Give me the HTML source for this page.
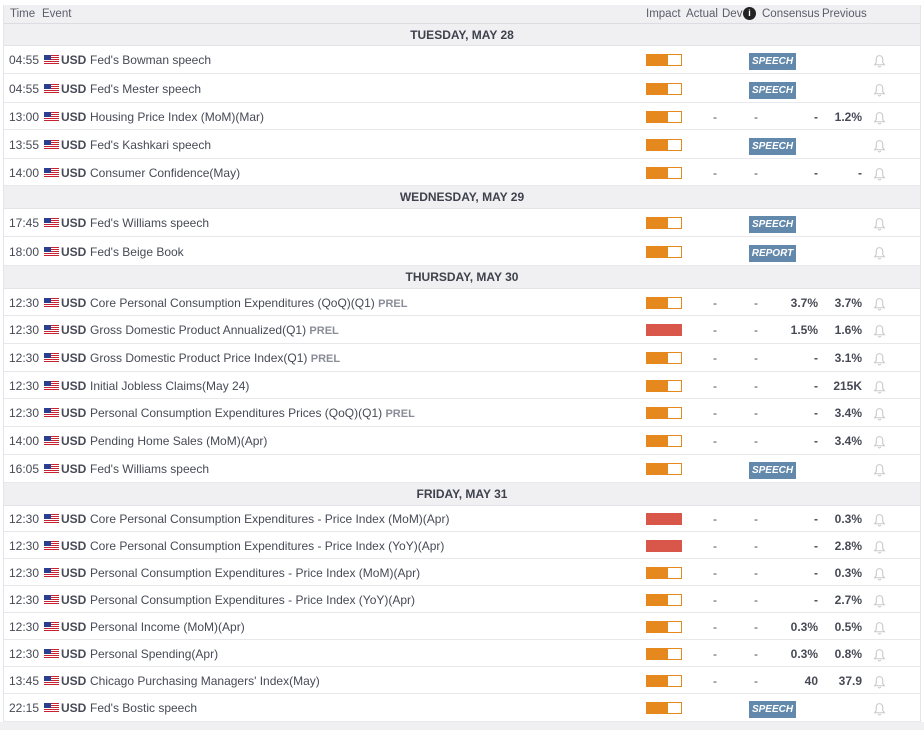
<!DOCTYPE html>
<html><head><meta charset="utf-8"><style>
*{margin:0;padding:0;box-sizing:border-box}
body{width:924px;height:730px;background:#fff;font-family:"Liberation Sans",Arial,sans-serif;font-size:12px;color:#474a56;position:relative;overflow:hidden}
.wrap{position:absolute;left:3px;top:5px;width:918px;height:725px;border-left:1px solid #e4e4e8;border-right:1px solid #e4e4e8}
.bot{position:absolute;left:0;top:722px;width:924px;height:8px;background:#f0f0f2}
.hd{position:absolute;left:4px;top:5px;width:916px;height:19px;background:#f0f0f3;border-bottom:1px solid #dcdce2;font-size:11.5px;color:#5a5d6a}
.hd span{position:absolute;top:3px}
.day{position:absolute;left:4px;width:916px;background:#f0f0f3;font-weight:bold;text-align:center;color:#3f424d;border-bottom:1px solid #e4e4e8}
.r{position:absolute;left:4px;width:916px;border-bottom:1px solid #e8e8ec}
.r>*{position:absolute}
.t{left:5px}
.f{left:40px;width:15px;height:10px;background:repeating-linear-gradient(#c8212f 0 1px,#fff 1px 2px)}
.f:before{content:"";position:absolute;left:0;top:0;width:7px;height:5px;background:#2a3f8f}
.c{left:57px;font-weight:bold}
.e{left:86px}
.p{color:#8a8d98;font-weight:bold;font-size:11px}
.imp{left:642px;width:36px;height:12px;border:1px solid #e5891e;background:linear-gradient(90deg,#e5891e 0 62%,#fff 62%)}
.imp.h{background:#d9574a;border-color:#d9574a}
.a{left:709px}.d{left:750px}
.cn{right:102px;font-weight:bold}
.pv{right:58px;font-weight:bold}
.b{left:745px;width:47px;height:17px;background:#6288ac;color:#fff;font-size:10px;font-weight:bold;font-style:italic;text-align:center;line-height:17px}
.bell{left:869px;width:13px;height:14px}
</style></head><body>
<div class="wrap"></div>
<div class="hd"><span style="left:6px">Time</span><span style="left:38px">Event</span><span style="left:642px">Impact</span><span style="left:682px">Actual</span><span style="left:718px">Dev</span><span style="left:739px;width:13px;height:13px;border-radius:7px;background:#222;color:#fff;font-size:9px;font-weight:bold;text-align:center;line-height:13px;top:2px">i</span><span style="left:758px">Consensus</span><span style="left:818px">Previous</span></div>
<div id="c"></div>
<div class="bot"></div>
<script>
var bell='<svg class="bell" viewBox="0 0 12 13"><path d="M6 1.5C3.8 1.5 3 3.2 3 5v3l-1.5 2h9L9 8V5c0-1.8-.8-3.5-3-3.5zM4.8 11.2a1.3 1.3 0 002.4 0" fill="none" stroke="#c8c8cd" stroke-width="1"/></svg>';
var rows=[
['D',24,46,'TUESDAY, MAY 28'],
['R',46,74,'04:55',"Fed's Bowman speech",'',0,'S'],
['R',74,103,'04:55',"Fed's Mester speech",'',0,'S'],
['R',103,130,'13:00','Housing Price Index (MoM)(Mar)','',0,['-','-','-','1.2%']],
['R',130,159,'13:55',"Fed's Kashkari speech",'',0,'S'],
['R',159,186,'14:00','Consumer Confidence(May)','',0,['-','-','-','-']],
['D',186,209,'WEDNESDAY, MAY 29'],
['R',209,237,'17:45',"Fed's Williams speech",'',0,'S'],
['R',237,266,'18:00',"Fed's Beige Book",'',0,'REPORT'],
['D',266,289,'THURSDAY, MAY 30'],
['R',289,316,'12:30','Core Personal Consumption Expenditures (QoQ)(Q1)','PREL',0,['-','-','3.7%','3.7%']],
['R',316,344,'12:30','Gross Domestic Product Annualized(Q1)','PREL',1,['-','-','1.5%','1.6%']],
['R',344,372,'12:30','Gross Domestic Product Price Index(Q1)','PREL',0,['-','-','-','3.1%']],
['R',372,399,'12:30','Initial Jobless Claims(May 24)','',0,['-','-','-','215K']],
['R',399,427,'12:30','Personal Consumption Expenditures Prices (QoQ)(Q1)','PREL',0,['-','-','-','3.4%']],
['R',427,455,'14:00','Pending Home Sales (MoM)(Apr)','',0,['-','-','-','3.4%']],
['R',455,483,'16:05',"Fed's Williams speech",'',0,'S'],
['D',483,506,'FRIDAY, MAY 31'],
['R',506,532,'12:30','Core Personal Consumption Expenditures - Price Index (MoM)(Apr)','',1,['-','-','-','0.3%']],
['R',532,559,'12:30','Core Personal Consumption Expenditures - Price Index (YoY)(Apr)','',1,['-','-','-','2.8%']],
['R',559,586,'12:30','Personal Consumption Expenditures - Price Index (MoM)(Apr)','',0,['-','-','-','0.3%']],
['R',586,613,'12:30','Personal Consumption Expenditures - Price Index (YoY)(Apr)','',0,['-','-','-','2.7%']],
['R',613,640,'12:30','Personal Income (MoM)(Apr)','',0,['-','-','0.3%','0.5%']],
['R',640,667,'12:30','Personal Spending(Apr)','',0,['-','-','0.3%','0.8%']],
['R',667,694,'13:45',"Chicago Purchasing Managers' Index(May)",'',0,['-','-','40','37.9']],
['R',694,722,'22:15',"Fed's Bostic speech",'',0,'S']
];
var h='';
rows.forEach(function(r){
 var H=r[2]-r[1];
 if(r[0]=='D'){h+='<div class="day" style="top:'+r[1]+'px;height:'+H+'px;line-height:'+H+'px">'+r[3]+'</div>';return;}
 var tp=(H-14)/2, s='top:'+tp+'px;line-height:14px';
 var x='<div class="r" style="top:'+r[1]+'px;height:'+H+'px">';
 x+='<span class="t" style="'+s+'">'+r[3]+'</span><span class="f" style="top:'+(H/2-5)+'px"></span><span class="c" style="'+s+'">USD</span>';
 x+='<span class="e" style="'+s+'">'+r[4]+(r[5]?' <span class="p">'+r[5]+'</span>':'')+'</span>';
 x+='<span class="imp'+(r[6]?' h':'')+'" style="top:'+(H/2-6)+'px"></span>';
 var v=r[7];
 if(typeof v=='string'){x+='<span class="b" style="top:'+(H/2-7)+'px">'+(v=='S'?'SPEECH':v)+'</span>';}
 else{x+='<span class="a" style="'+s+'">'+v[0]+'</span><span class="d" style="'+s+'">'+v[1]+'</span><span class="cn" style="'+s+'">'+v[2]+'</span><span class="pv" style="'+s+'">'+v[3]+'</span>';}
 x+=bell.replace('class="bell"','class="bell" style="top:'+(H/2-6)+'px"');
 h+=x+'</div>';
});
document.getElementById('c').innerHTML=h;
</script>
</body></html>
